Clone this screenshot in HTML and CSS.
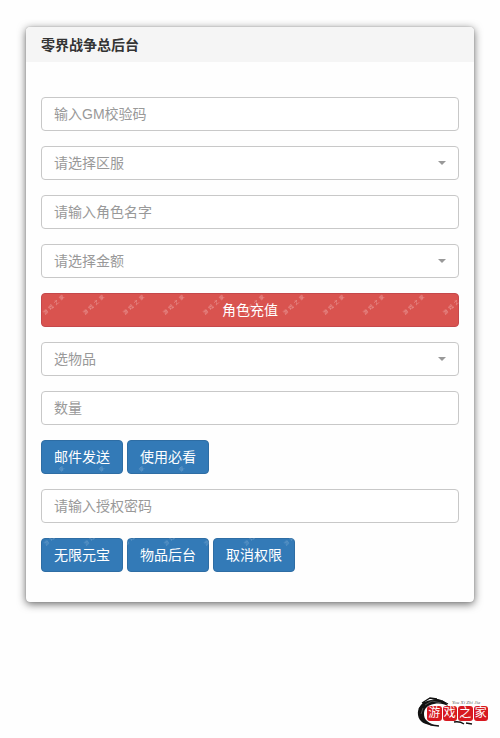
FILE: index.html
```
<!DOCTYPE html>
<html lang="zh-CN">
<head>
<meta charset="UTF-8">
<meta name="viewport" content="width=device-width, initial-scale=1.0">
<title>零界战争总后台</title>
<link rel="stylesheet" href="styles.css">
</head>
<body>

<div class="panel">
    <div class="panel-heading">零界战争总后台</div>
    <form class="panel-body">
        <input type="text" class="form-control" placeholder="输入GM校验码">
        <button type="button" class="form-control select">请选择区服<span class="caret"></span></button>
        <input type="text" class="form-control" placeholder="请输入角色名字">
        <button type="button" class="form-control select">请选择金额<span class="caret"></span></button>
        <button type="button" class="btn btn-danger">角色充值</button>
        <button type="button" class="form-control select">选物品<span class="caret"></span></button>
        <input type="text" class="form-control" placeholder="数量">
        <div class="btn-row">
            <button type="button" class="btn btn-primary">邮件发送</button>
            <button type="button" class="btn btn-primary">使用必看</button>
        </div>
        <input type="text" class="form-control" placeholder="请输入授权密码">
        <div class="btn-row">
            <button type="button" class="btn btn-primary">无限元宝</button>
            <button type="button" class="btn btn-primary">物品后台</button>
            <button type="button" class="btn btn-primary">取消权限</button>
        </div>
    </form>
</div>

<!-- watermark over the buttons -->
<svg class="watermark" width="500" height="738" viewBox="0 0 500 738">
    <defs>
        <pattern id="mark" width="40" height="34" patternUnits="userSpaceOnUse" x="41" y="293">
            <text class="mark-text" transform="translate(4 22) rotate(-42)">游戏之家</text>
        </pattern>
        <pattern id="mark-end" width="40" height="9" patternUnits="userSpaceOnUse" x="41" y="465">
            <text class="mark-text" transform="translate(20 7) rotate(-42)">家</text>
        </pattern>
        <pattern id="mark-start" width="40" height="9" patternUnits="userSpaceOnUse" x="41" y="538">
            <text class="mark-text" transform="translate(5 8) rotate(-42)">游戏</text>
        </pattern>
    </defs>
    <rect x="41" y="293" width="418" height="34" fill="url(#mark)"/>
    <rect x="41" y="465" width="168" height="9" fill="url(#mark-end)" opacity=".7"/>
    <rect x="41" y="538" width="254" height="9" fill="url(#mark-start)" opacity=".6"/>
</svg>

<div class="logo">
    <svg class="logo-ink" width="62" height="34" viewBox="0 0 62 34">
        <path d="M31 9C27 2 20 1 14 3C5 4 0 11 1 18C2 25 8 28 17 28C10 25 7 22 7 17C7 11 11 8 17 7C23 6 27 7 31 9Z" fill="#111"/>
        <path d="M5 6L13 1L20 2M2 12L8 5M25 4L31 7M6 24L14 28L22 29M37 25Q43 24 47 27M49 26L55 27" fill="none" stroke="#111" stroke-width="1.3"/>
        <path d="M8 8L15 4L24 6M4 17L6 11" fill="none" stroke="#777" stroke-width=".6"/>
    </svg>
    <span class="logo-small">You Xi Zhi Jia</span>
    <div class="logo-name"><span>游</span><span>戏</span><span>之</span><span>家</span></div>
</div>

</body>
</html>
```
FILE: styles.css
```
* {
  box-sizing: border-box;
}

body {
  margin: 0;
  padding: 27px 26px 0;
  height: 738px;
  position: relative;
  overflow: hidden;
  background: #fefefe;
  color: #333;
  font-family: "Liberation Sans", "Noto Sans CJK SC", sans-serif;
  font-size: 14px;
  line-height: 20px;
}

.panel {
  height: 575px;
  border-radius: 4px;
  background: #fefefe;
  box-shadow: 0 0 1px #777, 0 2px 9px #666;
}

.panel-heading {
  height: 35px;
  padding: 8px 15px;
  border-radius: 4px 4px 0 0;
  background: #f5f5f5;
  font-weight: bold;
}

.panel-body {
  display: flex;
  flex-direction: column;
  gap: 15px;
  padding: 35px 15px 0;
}

.form-control {
  width: 100%;
  height: 34px;
  padding: 6px 12px;
  border: 1px solid #c8c8c8;
  border-radius: 4px;
  background: #fff;
  color: #999;
  font: inherit;
}

.form-control::placeholder {
  color: #999;
  opacity: 1;
}

.select {
  display: flex;
  align-items: center;
  justify-content: space-between;
  text-align: left;
}

.caret {
  border-top: 4px solid #999;
  border-left: 4px solid transparent;
  border-right: 4px solid transparent;
}

.btn {
  height: 34px;
  padding: 6px 12px;
  border: 1px solid;
  border-radius: 4px;
  color: #fff;
  font: inherit;
}

.btn-danger {
  background: #d9534f;
  border-color: #c5484b;
}

.btn-primary {
  background: #337ab7;
  border-color: #2e6da4;
}

.btn-row {
  display: flex;
  gap: 4px;
}

.watermark {
  position: absolute;
  left: 0;
  top: 0;
  pointer-events: none;
}

.mark-text {
  fill: #fff;
  fill-opacity: .42;
  font-size: 5px;
  letter-spacing: 2.2px;
}

/* site logo in the bottom corner */
.logo {
  position: absolute;
  left: 417px;
  top: 697px;
  width: 74px;
  height: 34px;
}

.logo-ink {
  display: block;
}

.logo-small {
  position: absolute;
  left: 35px;
  top: 2px;
  color: #666;
  font: italic 5px/7px "Liberation Serif", serif;
  white-space: nowrap;
}

.logo-name {
  position: absolute;
  left: 10px;
  top: 9px;
  display: flex;
  gap: 1px;
}

.logo-name span {
  width: 14.5px;
  height: 15px;
  border-radius: 3px;
  background: #d71920;
  color: #fff;
  font-size: 12px;
  line-height: 14px;
  text-align: center;
}
```
